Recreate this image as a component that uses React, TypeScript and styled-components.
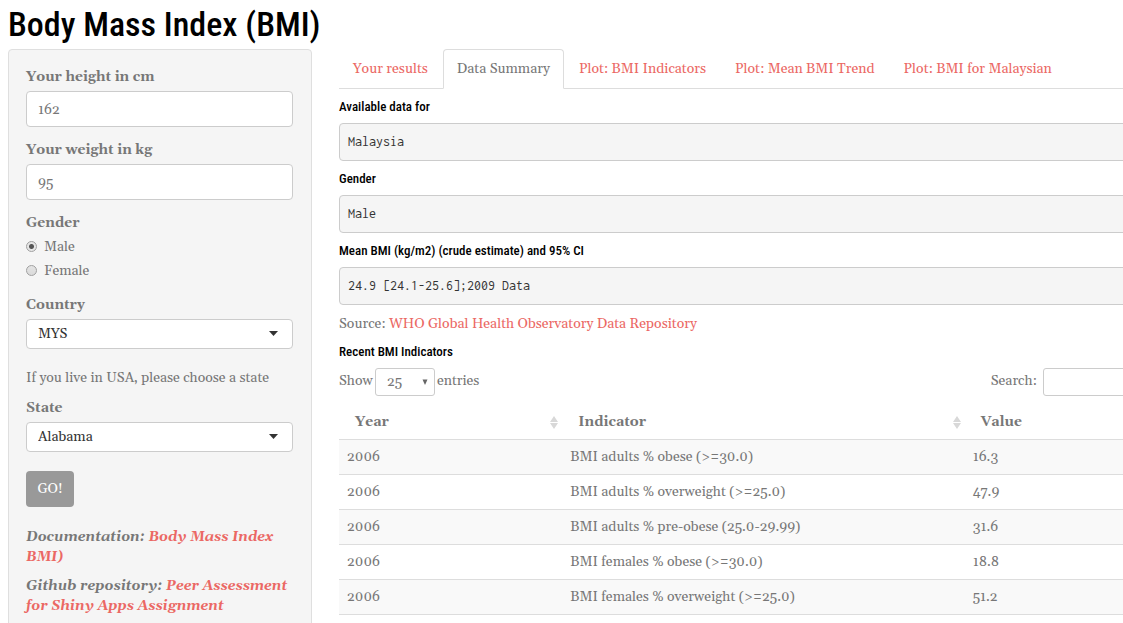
import React, { useState } from "react";
import styled, { createGlobalStyle } from "styled-components";

const serif = `Georgia, Gelasio, "Liberation Serif", serif`;
const narrow = `"Roboto Condensed", "Liberation Sans Narrow", "Liberation Sans", sans-serif`;
const mono = `Inconsolata, "Noto Sans Mono CJK SC", "Liberation Mono", monospace`;
const ink = "#777";
const accent = "#eb6864";

const GlobalStyle = createGlobalStyle`
  *, *::before, *::after { box-sizing: border-box; }
  body {
    margin: 0;
    background: #fff;
    color: ${ink};
    font: 14px/20px ${serif};
    overflow-x: hidden;
  }
  a { color: ${accent}; text-decoration: none; }
  input, select, button { font: inherit; color: inherit; }
`;

const Page = styled.div`
  padding-left: 8px;
  overflow: hidden;
`;

const Title = styled.h1`
  margin: 0;
  padding-top: 3px;
  height: 49px;
  font: 500 34px/42px ${narrow};
  color: #000;
`;

const Columns = styled.div`
  display: grid;
  grid-template-columns: 304px minmax(0, 1fr);
  column-gap: 27px;
  align-items: start;
`;

const Well = styled.form`
  padding: 17px 18px 17px 17px;
  background: #f5f5f5;
  border: 1px solid #dfdfdf;
  border-radius: 4px;
`;

const Field = styled.div`
  display: flex;
  flex-direction: column;
  gap: 4px;
  margin-bottom: 13px;
`;

const Label = styled.label`
  font-weight: 700;
`;

const TextBox = styled.input`
  width: 100%;
  height: 36px;
  padding: 2px 11px 0;
  border: 1px solid #ccc;
  border-radius: 4px;
  background: #fff;
`;

const RadioGroup = styled.fieldset`
  margin: 0 0 14px;
  padding: 0;
  border: 0;
  legend {
    padding: 0;
    font-weight: 700;
  }
`;

const RadioLabel = styled.label`
  display: flex;
  align-items: center;
  gap: 7px;
  margin-top: 4px;
`;

const Radio = styled.input`
  appearance: none;
  width: 11px;
  height: 11px;
  margin: 0 0 2px;
  border: 1px solid #a0a0a0;
  border-radius: 50%;
  background: linear-gradient(#e4e4e4, #dadada);
  &:checked {
    background: radial-gradient(circle, #555 0 2px, #e6e6e6 3px);
  }
`;

const SelectFrame = styled.div`
  display: grid;
  align-items: center;
  > * { grid-area: 1 / 1; }
  > svg {
    justify-self: end;
    margin: 0 15px 2px 0;
    pointer-events: none;
  }
`;

const Select = styled.select`
  appearance: none;
  width: 100%;
  height: 30px;
  padding: 0 11px;
  border: 1px solid #ccc;
  border-radius: 4px;
  background: #fff;
  color: #333;
`;

const Note = styled.p`
  margin: 19px 0 10px;
`;

const GoButton = styled.button`
  display: block;
  width: 48px;
  height: 36px;
  margin: 19px 0 20px;
  padding: 0;
  border: 0;
  border-radius: 4px;
  background: #999;
  color: #fff;
`;

const Reference = styled.p`
  margin: 0 0 9px;
  font-weight: 700;
  font-style: italic;
`;

const Main = styled.main`
  margin-right: -8px;
`;

const Tabs = styled.nav`
  display: flex;
  gap: 1px;
  height: 40px;
  border-bottom: 1px solid #ddd;
`;

const Tab = styled.a<{ $active?: boolean }>`
  height: 40px;
  padding: 9px 13px;
  border: 1px solid ${(p) => (p.$active ? "#ddd" : "transparent")};
  border-bottom-color: ${(p) => (p.$active ? "#fff" : "transparent")};
  border-radius: 4px 4px 0 0;
  white-space: nowrap;
  ${(p) => p.$active && `color: ${ink}; background: #fff;`}
`;

const Heading = styled.h5`
  margin: 9px 0 7px;
  font: 500 13px/18px ${narrow};
  color: #000;
`;

const Output = styled.pre`
  margin: 0 0 9px;
  padding: 8px;
  height: 38px;
  border: 1px solid #ccc;
  border-radius: 4px;
  background: #f5f5f5;
  color: #333;
  font: 14px/20px ${mono};
`;

const Source = styled.p`
  margin: 0;
`;

const Controls = styled.div`
  display: flex;
  justify-content: space-between;
`;

const ControlLabel = styled.label`
  display: flex;
  gap: 2px;
  line-height: 26px;
`;

const LengthFrame = styled(SelectFrame)`
  width: 60px;
  > svg { margin: 0 7px 0 0; }
`;

const LengthSelect = styled(Select)`
  height: 28px;
  border-radius: 3px;
  color: ${ink};
`;

const SearchLabel = styled(ControlLabel)`
  gap: 6px;
`;

const SearchBox = styled(TextBox)`
  width: 88px;
  height: 28px;
  border-radius: 3px;
`;

const Table = styled.table`
  width: 100%;
  margin-top: 8px;
  table-layout: fixed;
  border-collapse: collapse;
  text-align: left;
  th {
    height: 35px;
    padding: 2px 4px 0 16px;
  }
  td {
    height: 35px;
    padding: 0 8px;
    border-top: 1px solid #ddd;
    border-bottom: 1px solid #ddd;
  }
  tbody tr:nth-child(odd) { background: #f9f9f9; }
  th:nth-child(1) { width: 28.2%; }
  th:nth-child(2) { width: 50.8%; }
`;

const HeadCell = styled.div`
  display: flex;
  align-items: center;
  justify-content: space-between;
`;

const Caret = () => (
  <svg width="9" height="5" viewBox="0 0 9 5" aria-hidden="true">
    <path d="M0 0h9L4.500 5z" fill="#333" />
  </svg>
);

const SmallCaret = () => (
  <svg width="6" height="6" viewBox="0 0 6 6" aria-hidden="true">
    <path d="M0.500 0.500h5L3 6z" fill="#666" />
  </svg>
);

const SortIcon = () => (
  <svg width="8" height="13" viewBox="0 0 8 13" aria-hidden="true">
    <path d="M4 0l4 6H0zM0 7h8l-4 6z" fill="#d8d8d8" />
  </svg>
);

const tabs = ["Your results", "Data Summary", "Plot: BMI Indicators", "Plot: Mean BMI Trend", "Plot: BMI for Malaysian"];

const outputs = [
  ["Available data for", "Malaysia"],
  ["Gender", "Male"],
  ["Mean BMI (kg/m2) (crude estimate) and 95% CI", "24.9 [24.1-25.6];2009 Data"],
];

const rows = [
  ["2006", "BMI adults % obese (>=30.0)", "16.3"],
  ["2006", "BMI adults % overweight (>=25.0)", "47.9"],
  ["2006", "BMI adults % pre-obese (25.0-29.99)", "31.6"],
  ["2006", "BMI females % obese (>=30.0)", "18.8"],
  ["2006", "BMI females % overweight (>=25.0)", "51.2"],
];

export default function App() {
  const [gender, setGender] = useState("Male");
  const [active, setActive] = useState("Data Summary");

  return (
    <Page>
      <GlobalStyle />
      <Title>Body Mass Index (BMI)</Title>
      <Columns>
        <Well onSubmit={(e) => e.preventDefault()}>
          <Field>
            <Label htmlFor="height">Your height in cm</Label>
            <TextBox id="height" defaultValue="162" />
          </Field>
          <Field>
            <Label htmlFor="weight">Your weight in kg</Label>
            <TextBox id="weight" defaultValue="95" />
          </Field>
          <RadioGroup>
            <legend>Gender</legend>
            {["Male", "Female"].map((g) => (
              <RadioLabel key={g}>
                <Radio type="radio" name="gender" checked={gender === g} onChange={() => setGender(g)} />
                {g}
              </RadioLabel>
            ))}
          </RadioGroup>
          <Field>
            <Label htmlFor="country">Country</Label>
            <SelectFrame>
              <Select id="country"><option>MYS</option></Select>
              <Caret />
            </SelectFrame>
          </Field>
          <Note>If you live in USA, please choose a state</Note>
          <Field>
            <Label htmlFor="state">State</Label>
            <SelectFrame>
              <Select id="state"><option>Alabama</option></Select>
              <Caret />
            </SelectFrame>
          </Field>
          <GoButton type="submit">GO!</GoButton>
          <Reference>Documentation: <a href="#documentation">Body Mass Index BMI)</a></Reference>
          <Reference>Github repository: <a href="#repository">Peer Assessment for Shiny Apps Assignment</a></Reference>
        </Well>
        <Main>
          <Tabs>
            {tabs.map((t) => (
              <Tab key={t} href="#tab" $active={t === active} onClick={() => setActive(t)}>{t}</Tab>
            ))}
          </Tabs>
          {outputs.map(([title, value]) => (
            <section key={title}>
              <Heading>{title}</Heading>
              <Output>{value}</Output>
            </section>
          ))}
          <Source>Source: <a href="#who">WHO Global Health Observatory Data Repository</a></Source>
          <Heading>Recent BMI Indicators</Heading>
          <Controls>
            <ControlLabel>
              Show
              <LengthFrame>
                <LengthSelect><option>25</option></LengthSelect>
                <SmallCaret />
              </LengthFrame>
              entries
            </ControlLabel>
            <SearchLabel>
              Search:
              <SearchBox type="search" />
            </SearchLabel>
          </Controls>
          <Table>
            <thead>
              <tr>
                <th><HeadCell>Year<SortIcon /></HeadCell></th>
                <th><HeadCell>Indicator<SortIcon /></HeadCell></th>
                <th>Value</th>
              </tr>
            </thead>
            <tbody>
              {rows.map(([year, indicator, value]) => (
                <tr key={indicator}>
                  <td>{year}</td>
                  <td>{indicator}</td>
                  <td>{value}</td>
                </tr>
              ))}
            </tbody>
          </Table>
        </Main>
      </Columns>
    </Page>
  );
}
